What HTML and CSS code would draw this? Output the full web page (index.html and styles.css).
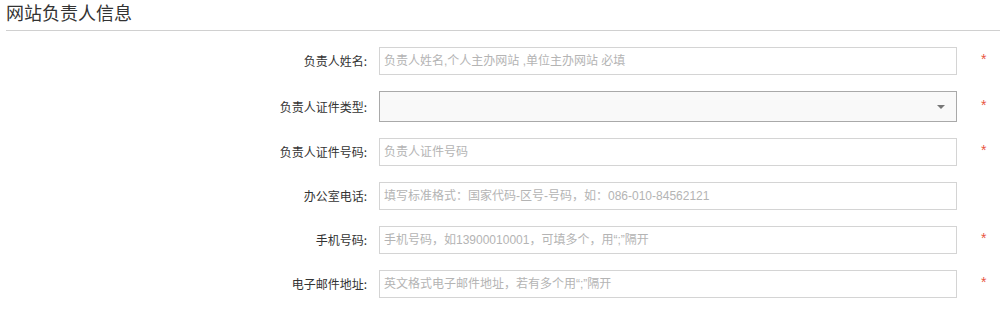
FILE: index.html
```html
<!DOCTYPE html>
<html lang="zh-CN">
<head>
<meta charset="utf-8">
<title>网站负责人信息</title>
<link rel="stylesheet" href="styles.css">
</head>
<body>
<div class="panel">
  <h2 class="title">网站负责人信息</h2>
  <form class="form">
    <div class="row">
      <label class="label">负责人姓名:</label>
      <input class="field" type="text" placeholder="负责人姓名,个人主办网站 ,单位主办网站 必填">
      <span class="req">*</span>
    </div>
    <div class="row">
      <label class="label">负责人证件类型:</label>
      <div class="select"><span class="arrow"></span></div>
      <span class="req">*</span>
    </div>
    <div class="row">
      <label class="label">负责人证件号码:</label>
      <input class="field" type="text" placeholder="负责人证件号码">
      <span class="req">*</span>
    </div>
    <div class="row">
      <label class="label">办公室电话:</label>
      <input class="field" type="text" placeholder="填写标准格式：国家代码-区号-号码，如：086-010-84562121">
      <span class="req"></span>
    </div>
    <div class="row">
      <label class="label">手机号码:</label>
      <input class="field" type="text" placeholder="手机号码，如13900010001，可填多个，用“;”隔开">
      <span class="req">*</span>
    </div>
    <div class="row">
      <label class="label">电子邮件地址:</label>
      <input class="field" type="text" placeholder="英文格式电子邮件地址，若有多个用“;”隔开">
      <span class="req">*</span>
    </div>
  </form>
</div>
</body>
</html>
```
FILE: styles.css
```css
* { box-sizing: border-box; }
html, body { margin: 0; padding: 0; background: #fff; }
body {
  font-family: "Noto Sans CJK SC", "Microsoft YaHei", "Noto Sans", sans-serif;
  font-size: 12px;
  color: #333;
}
.panel { padding-left: 6px; }
.title {
  margin: 0;
  font-size: 18px;
  font-weight: normal;
  line-height: 25px;
  padding-bottom: 5px;
  color: #333;
  border-bottom: 1px solid #d0d0d0;
}
.form { padding-top: 16px; }
.row {
  display: flex;
  align-items: center;
  margin-bottom: 16px;
}
.label {
  width: 361px;
  text-align: right;
  color: #333;
  line-height: 16px;
}
.field {
  margin-left: 12px;
  width: 578px;
  height: 28px;
  border: 1px solid #d4d4d4;
  padding: 0 4px;
  font-family: "Liberation Sans", "Noto Sans CJK SC", sans-serif;
  font-size: 12px;
  color: #333;
  outline: none;
}
.field::placeholder { color: #b4b4b4; }
.select {
  margin-left: 12px;
  width: 578px;
  height: 31px;
  border: 1px solid #a9a9a9;
  background: #f9f9f9;
  display: flex;
  align-items: center;
  justify-content: flex-end;
  padding-right: 11px;
}
.arrow {
  width: 0;
  height: 0;
  border-left: 4px solid transparent;
  border-right: 4px solid transparent;
  border-top: 4px solid #777;
}
.req {
  margin-left: 24px;
  color: #e8563f;
  font-family: "Liberation Sans", sans-serif;
  font-size: 14px;
  line-height: 14px;
  margin-top: -4px;
}
```
